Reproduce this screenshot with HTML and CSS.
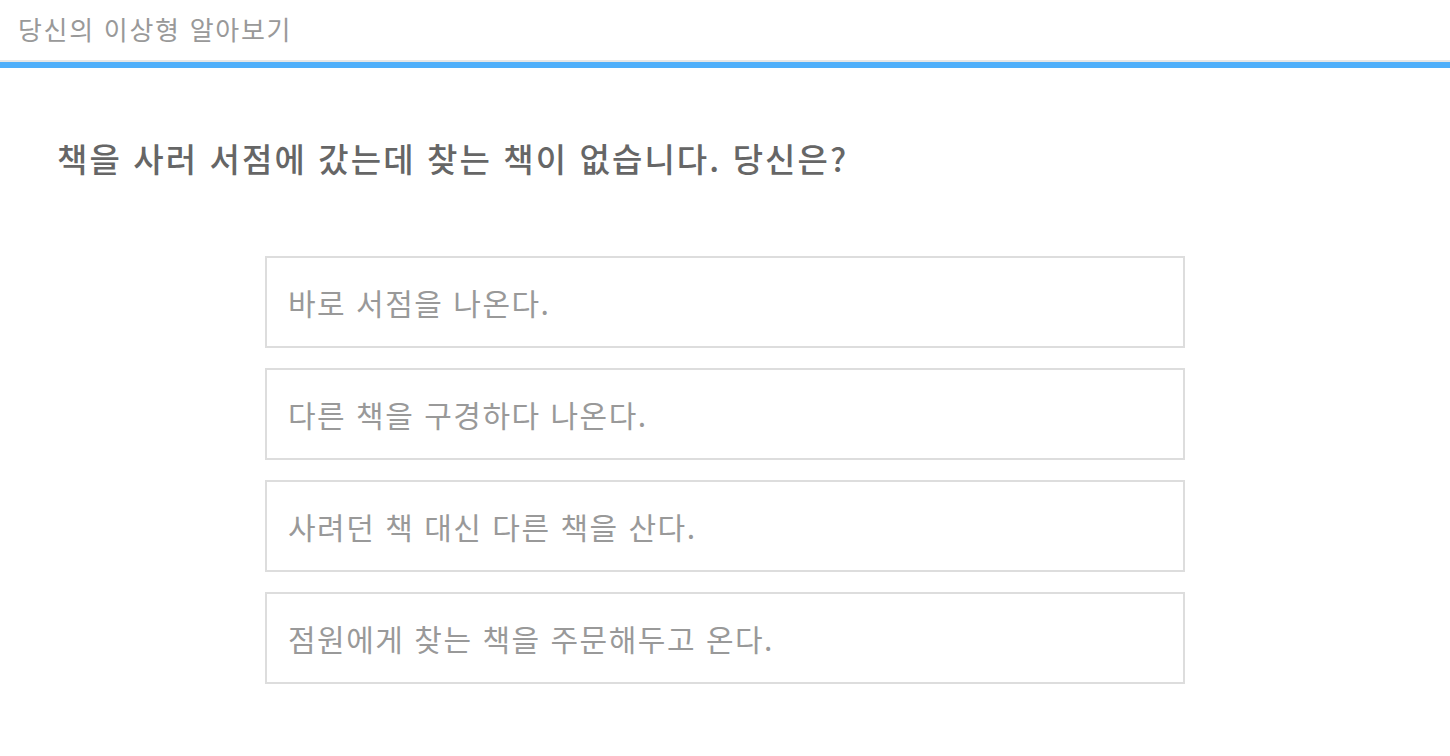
FILE: index.html
```html
<!DOCTYPE html>
<html lang="ko">
<head>
<meta charset="utf-8">
<title>당신의 이상형 알아보기</title>
<link rel="stylesheet" href="styles.css">
</head>
<body>
<header class="header">
  <h1 class="title">당신의 이상형 알아보기</h1>
</header>
<div class="progress"></div>
<main class="content">
  <h2 class="question">책을 사러 서점에 갔는데 찾는 책이 없습니다. 당신은?</h2>
  <ul class="options">
    <li class="option">바로 서점을 나온다.</li>
    <li class="option">다른 책을 구경하다 나온다.</li>
    <li class="option">사려던 책 대신 다른 책을 산다.</li>
    <li class="option">점원에게 찾는 책을 주문해두고 온다.</li>
  </ul>
</main>
</body>
</html>
```

FILE: styles.css
```css
* { box-sizing: border-box; }
html, body { margin: 0; padding: 0; background: #fff; }
body {
  font-family: "Noto Sans CJK KR", "Noto Sans", sans-serif;
}
.header {
  height: 62px;
  border-bottom: 2px solid #e6e6e6;
  display: flex;
  align-items: center;
  padding: 0 18px 2px;
}
.title {
  margin: 0;
  font-size: 26px;
  font-weight: 400;
  color: #999;
  line-height: 1;
  letter-spacing: 1.7px;
}
.progress {
  height: 6px;
  background: #4faffa;
}
.content {
  padding: 0 0 40px;
}
.question {
  margin: 70px 0 0 57px;
  font-size: 33px;
  font-weight: 500;
  color: #666;
  line-height: 40px;
  letter-spacing: 2.1px;
}
.options {
  list-style: none;
  margin: 78px auto 0;
  padding: 0;
  width: 920px;
  display: flex;
  flex-direction: column;
  gap: 20px;
}
.option {
  height: 92px;
  border: 2px solid #dddddd;
  display: flex;
  align-items: center;
  padding: 0 21px;
  font-size: 30px;
  color: #999;
  letter-spacing: 1.5px;
}
```
